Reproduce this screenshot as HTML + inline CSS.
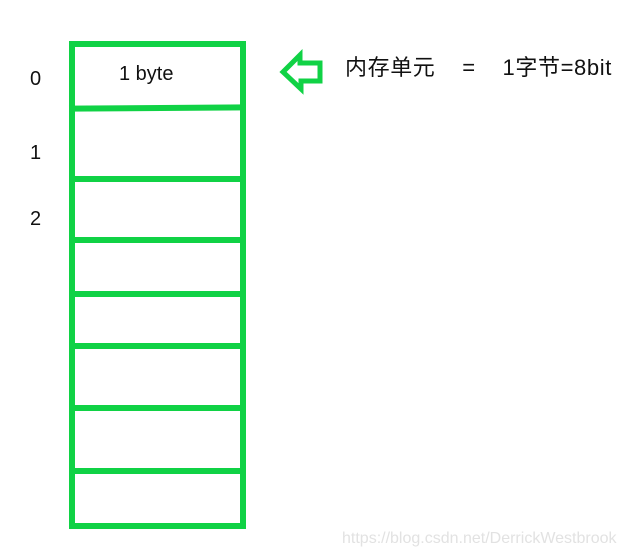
<!DOCTYPE html>
<html><head><meta charset="utf-8"><style>
html,body{margin:0;padding:0;background:#fff;width:622px;height:557px;overflow:hidden;position:relative;font-family:"Liberation Sans","Noto Sans CJK SC",sans-serif;color:#111}
.r{position:absolute;background:#10d245}
.t{position:absolute;white-space:nowrap}
</style></head><body>
<div class="r" style="left:69px;top:41px;width:177px;height:6px"></div>
<div class="r" style="left:69px;top:523px;width:177px;height:6px"></div>
<div class="r" style="left:69px;top:41px;width:6px;height:488px"></div>
<div class="r" style="left:240px;top:41px;width:6px;height:488px"></div>
<div class="r" style="left:69px;top:105px;width:177px;height:6px;transform:rotate(-0.4deg)"></div>
<div class="r" style="left:69px;top:176px;width:177px;height:6px"></div>
<div class="r" style="left:69px;top:237px;width:177px;height:6px"></div>
<div class="r" style="left:69px;top:291px;width:177px;height:6px"></div>
<div class="r" style="left:69px;top:343px;width:177px;height:6px"></div>
<div class="r" style="left:69px;top:405px;width:177px;height:6px"></div>
<div class="r" style="left:69px;top:468px;width:177px;height:6px"></div>
<div class="t" style="left:119px;top:63px;font-size:20px">1 byte</div>
<div class="t" style="left:30px;top:68px;font-size:20px">0</div>
<div class="t" style="left:30px;top:142px;font-size:20px">1</div>
<div class="t" style="left:30px;top:208px;font-size:20px">2</div>
<svg style="position:absolute;left:0;top:0" width="622" height="557">
<polygon points="283,72 300,55 300,63 320,63 320,81 301,81 301,89" fill="none" stroke="#10d245" stroke-width="5" stroke-linejoin="miter"/>
</svg>
<div class="t" style="left:345px;top:50px;font-size:22px;letter-spacing:0.6px">内存单元&nbsp;&nbsp;&nbsp;&nbsp;=&nbsp;&nbsp;&nbsp;&nbsp;1字节=8bit</div>
<div class="t" style="left:342px;top:530px;font-size:16px;color:#e2e2e2">https://blog.csdn.net/DerrickWestbrook</div>
</body></html>
